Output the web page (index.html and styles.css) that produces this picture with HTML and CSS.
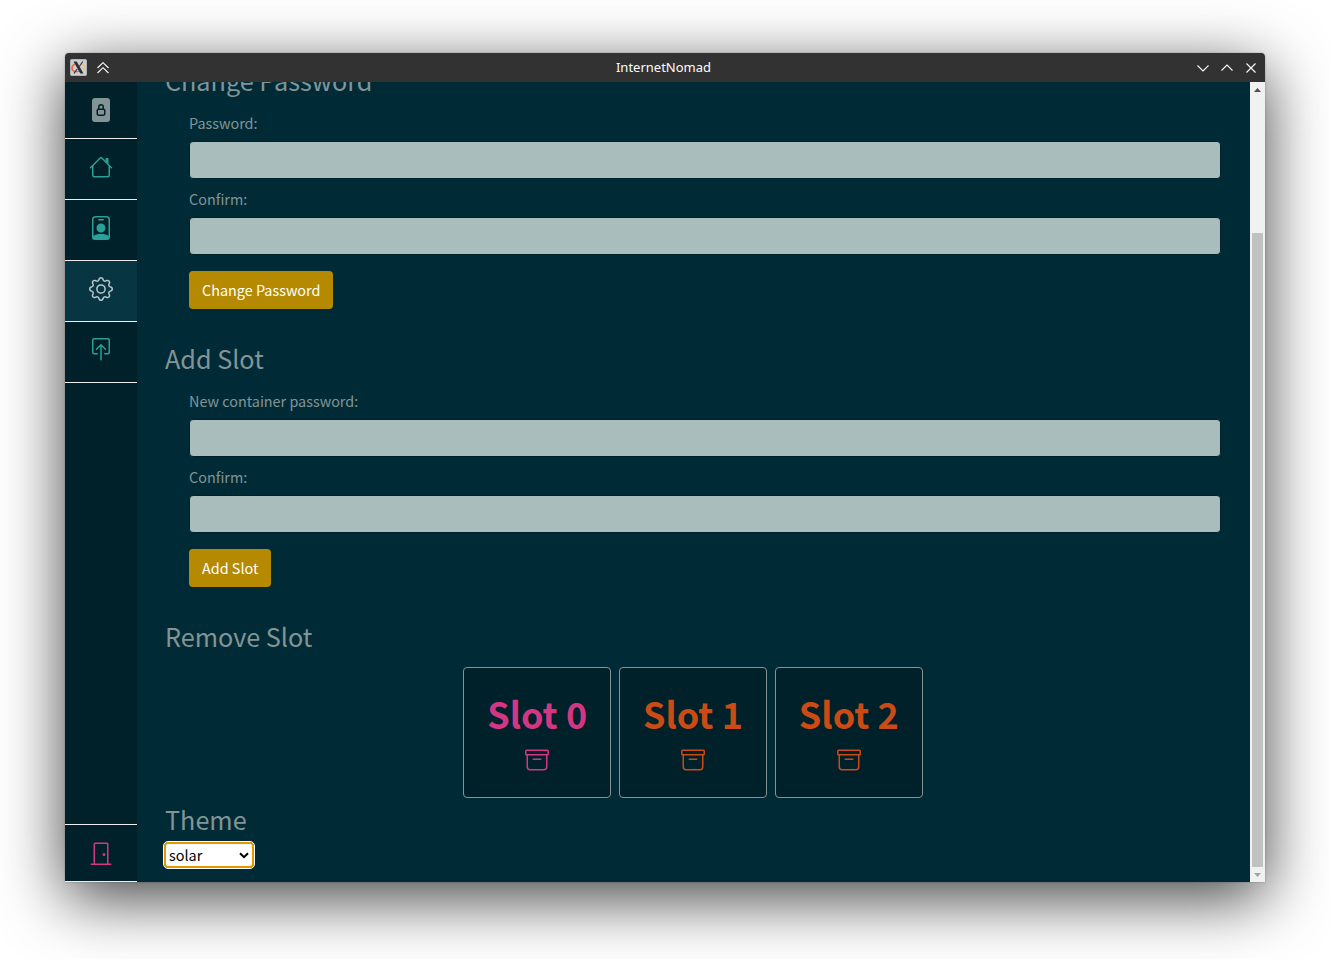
FILE: index.html
```html
<!DOCTYPE html>
<html lang="en">
<head>
<meta charset="utf-8">
<title>InternetNomad</title>
<link rel="stylesheet" href="styles.css">
</head>
<body>
<div class="window">
  <header class="titlebar">
    <div class="title-left">
      <svg class="app-icon" viewBox="0 0 17 17"><rect x=".5" y=".5" width="16" height="16" rx="1" fill="#c9cfd3" stroke="#aeb4b8"/><path d="M5.2 4.9C1 7 .8 11.500 5 12.500c2 .5 4.500-.5 6-1.500" fill="none" stroke="#e8673c" stroke-width="1.500"/><path d="M11 5c3.500.3 5 3.500 2.800 6.200" fill="none" stroke="#edbd72" stroke-width="1.300"/><path d="M3.500 2.500h3.200l6.800 12h-3.200z" fill="#2b3034"/><path d="M12.800 2.500 9.300 7.500M7.200 10 4 14.500" stroke="#2b3034" stroke-width="1.100"/></svg>
      <svg class="win-icon" viewBox="0 0 12 12"><path d="M.5 6 6 .7 11.500 6M.5 11 6 5.700 11.500 11"/></svg>
    </div>
    <span class="title-text">InternetNomad</span>
    <div class="title-right">
      <svg class="win-icon" viewBox="0 0 12 12"><path d="M.5 3.500 6 9l5.500-5.500"/></svg>
      <svg class="win-icon" viewBox="0 0 12 12"><path d="M.5 8.500 6 3l5.500 5.500"/></svg>
      <svg class="win-icon" viewBox="0 0 12 12"><path d="m1.500 1.500 9 9m0-9-9 9"/></svg>
    </div>
  </header>
  <div class="body">
    <nav class="sidebar">
      <a class="nav-item lock"><svg class="icon" viewBox="0 0 16 16"><path d="M7 6a1 1 0 0 1 2 0v1H7V6zM6 8.3c0-.042.02-.107.105-.175A.637.637 0 0 1 6.500 8h3a.64.64 0 0 1 .395.125c.085.068.105.133.105.175v2.400c0 .042-.02.107-.105.175A.637.637 0 0 1 9.500 11h-3a.637.637 0 0 1-.395-.125C6.020 10.807 6 10.742 6 10.700V8.300z"/><path d="M12 0H4a2 2 0 0 0-2 2v12a2 2 0 0 0 2 2h8a2 2 0 0 0 2-2V2a2 2 0 0 0-2-2zm-2 6v1.076c.54.166 1 .597 1 1.224v2.400c0 .816-.781 1.300-1.500 1.300h-3c-.719 0-1.500-.484-1.500-1.300V8.300c0-.627.46-1.058 1-1.224V6a2 2 0 1 1 4 0z"/></svg></a>
      <a class="nav-item"><svg class="icon" viewBox="0 0 16 16"><path d="M2 13.500V7h1v6.500a.5.5 0 0 0 .5.5h9a.5.5 0 0 0 .5-.5V7h1v6.500a1.500 1.500 0 0 1-1.500 1.500h-9A1.500 1.500 0 0 1 2 13.500zm11-11V6l-2-2V2.500a.5.5 0 0 1 .5-.5h1a.5.5 0 0 1 .5.5z"/><path d="M7.293 1.500a1 1 0 0 1 1.414 0l6.647 6.646a.5.5 0 0 1-.708.708L8 2.207 1.354 8.854a.5.5 0 1 1-.708-.708L7.293 1.500z"/></svg></a>
      <a class="nav-item"><svg class="icon" viewBox="0 0 16 16"><path d="M6.500 2a.5.5 0 0 0 0 1h3a.5.5 0 0 0 0-1h-3zM11 8a3 3 0 1 1-6 0 3 3 0 0 1 6 0z"/><path d="M4.500 0A2.500 2.500 0 0 0 2 2.500V14a2 2 0 0 0 2 2h8a2 2 0 0 0 2-2V2.500A2.500 2.500 0 0 0 11.500 0h-7zM3 2.500A1.500 1.500 0 0 1 4.500 1h7A1.500 1.500 0 0 1 13 2.500v10.795a4.200 4.200 0 0 0-.776-.492C11.392 12.387 10.063 12 8 12s-3.392.387-4.224.803a4.200 4.200 0 0 0-.776.492V2.500z"/></svg></a>
      <a class="nav-item active"><svg class="icon" viewBox="0 0 16 16"><path d="M8 4.754a3.246 3.246 0 1 0 0 6.492 3.246 3.246 0 0 0 0-6.492zM5.754 8a2.246 2.246 0 1 1 4.492 0 2.246 2.246 0 0 1-4.492 0z"/><path d="M9.796 1.343c-.527-1.790-3.065-1.790-3.592 0l-.094.319a.873.873 0 0 1-1.255.52l-.292-.16c-1.640-.892-3.433.902-2.540 2.541l.159.292a.873.873 0 0 1-.52 1.255l-.319.094c-1.790.527-1.790 3.065 0 3.592l.319.094a.873.873 0 0 1 .52 1.255l-.16.292c-.892 1.640.901 3.434 2.541 2.540l.292-.159a.873.873 0 0 1 1.255.52l.094.319c.527 1.790 3.065 1.790 3.592 0l.094-.319a.873.873 0 0 1 1.255-.52l.292.16c1.640.893 3.434-.902 2.540-2.541l-.159-.292a.873.873 0 0 1 .52-1.255l.319-.094c1.790-.527 1.790-3.065 0-3.592l-.319-.094a.873.873 0 0 1-.52-1.255l.16-.292c.893-1.640-.902-3.433-2.541-2.540l-.292.159a.873.873 0 0 1-1.255-.52l-.094-.319zm-2.633.283c.246-.835 1.428-.835 1.674 0l.094.319a1.873 1.873 0 0 0 2.693 1.115l.291-.16c.764-.415 1.600.42 1.184 1.185l-.159.292a1.873 1.873 0 0 0 1.116 2.692l.318.094c.835.246.835 1.428 0 1.674l-.319.094a1.873 1.873 0 0 0-1.115 2.693l.16.291c.415.764-.42 1.600-1.185 1.184l-.291-.159a1.873 1.873 0 0 0-2.693 1.116l-.094.318c-.246.835-1.428.835-1.674 0l-.094-.319a1.873 1.873 0 0 0-2.692-1.115l-.292.16c-.764.415-1.600-.42-1.184-1.185l.159-.291A1.873 1.873 0 0 0 1.945 8.930l-.319-.094c-.835-.246-.835-1.428 0-1.674l.319-.094A1.873 1.873 0 0 0 3.060 4.377l-.16-.292c-.415-.764.42-1.600 1.185-1.184l.292.159a1.873 1.873 0 0 0 2.692-1.115l.094-.319z"/></svg></a>
      <a class="nav-item"><svg class="icon" viewBox="0 0 16 16"><path d="M3.500 10a.5.5 0 0 1-.5-.5v-8a.5.5 0 0 1 .5-.5h9a.5.5 0 0 1 .5.5v8a.5.5 0 0 1-.5.5h-2a.5.5 0 0 0 0 1h2A1.500 1.500 0 0 0 14 9.500v-8A1.500 1.500 0 0 0 12.500 0h-9A1.500 1.500 0 0 0 2 1.500v8A1.500 1.500 0 0 0 3.500 11h2a.5.5 0 0 0 0-1h-2z"/><path d="M7.646 4.146a.5.5 0 0 1 .708 0l3 3a.5.5 0 0 1-.708.708L8.500 5.707V14.500a.5.5 0 0 1-1 0V5.707L5.354 7.854a.5.5 0 1 1-.708-.708l3-3z"/></svg></a>
      <a class="nav-item exit"><svg class="icon" viewBox="0 0 16 16"><path d="M3 2a1 1 0 0 1 1-1h8a1 1 0 0 1 1 1v13h1.500a.5.5 0 0 1 0 1h-13a.5.5 0 0 1 0-1H3V2zm1 13h8V2H4v13z"/><path d="M9 9a1 1 0 1 0 2 0 1 1 0 0 0-2 0z"/></svg></a>
    </nav>
    <main class="content">
      <section class="section scrolled">
        <h3 class="heading">Change Password</h3>
        <form class="form">
          <label class="label">Password:</label>
          <input class="field" type="password">
          <label class="label">Confirm:</label>
          <input class="field" type="password">
          <button class="btn" type="button">Change Password</button>
        </form>
      </section>
      <section class="section">
        <h3 class="heading">Add Slot</h3>
        <form class="form">
          <label class="label">New container password:</label>
          <input class="field" type="password">
          <label class="label">Confirm:</label>
          <input class="field" type="password">
          <button class="btn" type="button">Add Slot</button>
        </form>
      </section>
      <section class="section">
        <h3 class="heading">Remove Slot</h3>
        <div class="slots">
          <div class="slot current"><span class="slot-name">Slot 0</span><svg class="icon" viewBox="0 0 16 16"><path d="M0 2a1 1 0 0 1 1-1h14a1 1 0 0 1 1 1v2a1 1 0 0 1-1 1v7.500a2.500 2.500 0 0 1-2.500 2.500h-9A2.500 2.500 0 0 1 1 12.500V5a1 1 0 0 1-1-1V2zm2 3v7.500A1.500 1.500 0 0 0 3.500 14h9a1.500 1.500 0 0 0 1.500-1.500V5H2zm13-3H1v2h14V2zM5 7.500a.5.5 0 0 1 .5-.5h5a.5.5 0 0 1 0 1h-5a.5.5 0 0 1-.5-.5z"/></svg></div>
          <div class="slot"><span class="slot-name">Slot 1</span><svg class="icon" viewBox="0 0 16 16"><path d="M0 2a1 1 0 0 1 1-1h14a1 1 0 0 1 1 1v2a1 1 0 0 1-1 1v7.500a2.500 2.500 0 0 1-2.500 2.500h-9A2.500 2.500 0 0 1 1 12.500V5a1 1 0 0 1-1-1V2zm2 3v7.500A1.500 1.500 0 0 0 3.500 14h9a1.500 1.500 0 0 0 1.500-1.500V5H2zm13-3H1v2h14V2zM5 7.500a.5.5 0 0 1 .5-.5h5a.5.5 0 0 1 0 1h-5a.5.5 0 0 1-.5-.5z"/></svg></div>
          <div class="slot"><span class="slot-name">Slot 2</span><svg class="icon" viewBox="0 0 16 16"><path d="M0 2a1 1 0 0 1 1-1h14a1 1 0 0 1 1 1v2a1 1 0 0 1-1 1v7.500a2.500 2.500 0 0 1-2.500 2.500h-9A2.500 2.500 0 0 1 1 12.500V5a1 1 0 0 1-1-1V2zm2 3v7.500A1.500 1.500 0 0 0 3.500 14h9a1.500 1.500 0 0 0 1.500-1.500V5H2zm13-3H1v2h14V2zM5 7.500a.5.5 0 0 1 .5-.5h5a.5.5 0 0 1 0 1h-5a.5.5 0 0 1-.5-.5z"/></svg></div>
        </div>
      </section>
      <section class="section">
        <h3 class="heading theme-heading">Theme</h3>
        <div class="select"><span>solar</span><svg class="chevron" viewBox="0 0 10 7"><path d="m1 1.200 4 4 4-4"/></svg></div>
      </section>
    </main>
    <div class="scrollbar">
      <svg class="arrow up" viewBox="0 0 7 4"><path d="M0 4 3.500 0 7 4z"/></svg>
      <div class="thumb"></div>
      <svg class="arrow down" viewBox="0 0 7 4"><path d="M0 0h7L3.500 4z"/></svg>
    </div>
  </div>
</div>
</body>
</html>
```

FILE: styles.css
```css
* { box-sizing: border-box; }
body {
  margin: 0;
  height: 959px;
  padding: 53px 65px 77px;
  overflow: hidden;
  background: #fff;
  font-family: "Noto Sans CJK SC", sans-serif;
  font-size: 14.4px;
  line-height: 24px;
  color: #839496;
}
.window {
  display: flex;
  flex-direction: column;
  width: 1200px;
  height: 829px;
  border-radius: 4px 4px 0 0;
  box-shadow: 0 16px 64px rgba(0, 0, 0, .75), 0 0 2px rgba(0, 0, 0, .3);
}
.titlebar {
  display: grid;
  grid-template-columns: 1fr auto 1fr;
  align-items: center;
  height: 29px;
  padding: 0 8px 0 5px;
  background: #323232;
  border-radius: 4px 4px 0 0;
}
.title-text {
  color: #fcfcfc;
  font: 13px/29px "Noto Sans", sans-serif;
}
.title-left, .title-right { display: flex; align-items: center; }
.title-left { gap: 10px; }
.title-right { gap: 12px; justify-content: flex-end; }
.app-icon { width: 17px; height: 17px; }
.win-icon {
  width: 12px;
  height: 12px;
  fill: none;
  stroke: #fcfcfc;
  stroke-width: 1.1;
}
.body { display: flex; height: 800px; background: #002b36; }
.sidebar {
  display: flex;
  flex-direction: column;
  width: 72px;
  background: #002129;
  color: #2aa198;
}
.nav-item {
  display: flex;
  justify-content: center;
  height: 61px;
  padding-top: 16px;
  border-bottom: 1px solid #eee;
}
.nav-item.lock { height: 57px; color: #839496; }
.nav-item.active { background: #073642; color: #b9c7ca; }
.nav-item.exit {
  height: 58px;
  margin-top: auto;
  border-top: 1px solid #eee;
  color: #d33682;
}
.icon { display: block; width: 24px; height: 24px; fill: currentColor; }
.content { flex: 1; padding: 0 29px 0 28px; overflow: hidden; }
.section.scrolled { margin-top: -19px; }
.heading {
  margin: 0 0 14px;
  font-size: 25.2px;
  font-weight: 400;
  line-height: 34px;
}
.form { display: flex; flex-direction: column; padding: 0 0 32px 24px; }
.label { margin-bottom: 6px; }
.field {
  height: 38px;
  margin: 0 0 8px;
  border: 1px solid #002129;
  border-radius: 4px;
  background: #a9bdbd;
}
.btn {
  align-self: flex-start;
  height: 38px;
  margin-top: 8px;
  padding: 0 13px;
  border: 0;
  border-radius: 4px;
  background: #b58900;
  color: #fff;
  font: inherit;
}
.slots { display: flex; justify-content: center; gap: 8px; }
.slot {
  display: flex;
  flex-direction: column;
  align-items: center;
  width: 147.800px;
  height: 131px;
  padding-top: 21px;
  border: 1px solid #839496;
  border-radius: 4px;
  background: #002129;
  color: #cb4b16;
}
.slot.current { color: #d33682; }
.slot-name { margin-bottom: 11px; font-size: 36px; font-weight: 700; line-height: 48px; }
.theme-heading { margin: 4px 0 6px; }
.select {
  display: flex;
  align-items: center;
  justify-content: space-between;
  width: 90px;
  height: 26px;
  margin-left: -1px;
  padding: 0 3px;
  border: 2px solid #e59700;
  outline: 1px solid #fff;
  outline-offset: 0;
  border-radius: 4px;
  background: #fff;
  color: #000;
}
.chevron { width: 10px; height: 7px; fill: none; stroke: #000; stroke-width: 2; }
.scrollbar {
  display: flex;
  flex-direction: column;
  align-items: center;
  width: 15px;
  padding: 6px 0 5px;
  background: #f1f1f1;
}
.arrow { width: 7px; height: 4px; fill: #505050; }
.arrow.down { margin-top: auto; fill: #a3a3a3; }
.thumb { width: 11px; height: 634px; margin-top: 141px; background: #c1c1c1; }
```
